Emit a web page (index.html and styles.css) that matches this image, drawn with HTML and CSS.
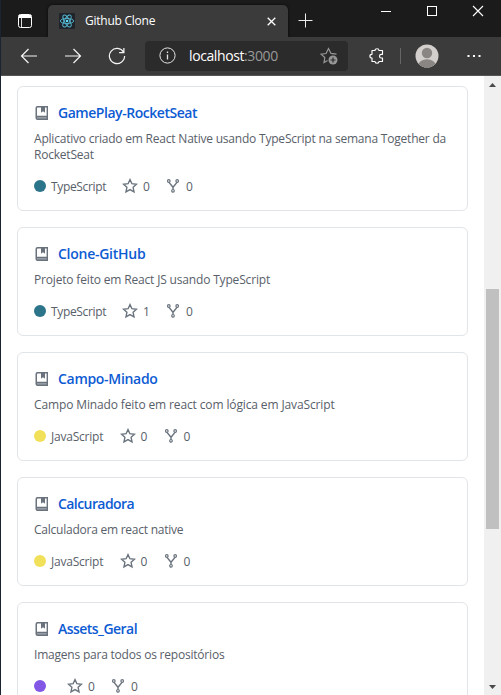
FILE: index.html
```
<!DOCTYPE html>
<html lang="pt-BR">
<head>
<meta charset="utf-8">
<title>Github Clone</title>
<link rel="stylesheet" href="styles.css">
</head>
<body>
<svg class="defs" aria-hidden="true">
  <symbol id="book" viewBox="0 0 16 16"><path fill-rule="evenodd" d="M3.500 1H14v14H3.500A2 2 0 0 1 1.500 13V3A2 2 0 0 1 3.500 1zM3 3.200v7.600h9.600V2.400H11v5L9 6 7 7.400v-5H3.800a.8.8 0 0 0-.8.8z"/><path d="M7 2h4v5.400L9 6 7 7.400z"/><path d="M3 12.500h9.600v.8H3z" fill="#c3c7cb"/></symbol>
  <symbol id="star" viewBox="0 0 16 16"><path fill="none" stroke="currentColor" stroke-width="1.400" d="M8 1.600l1.900 4.100 4.600.5-3.400 3.100.9 4.500L8 11.600l-4 2.200.9-4.500L1.500 6.200l4.600-.5z"/></symbol>
  <symbol id="fork" viewBox="0 0 16 16"><g fill="none" stroke="currentColor" stroke-width="1.200"><circle cx="3.800" cy="3" r="1.300"/><circle cx="12.200" cy="3" r="1.300"/><circle cx="8" cy="12.800" r="1.300"/><path stroke-width="1.400" d="M4 4.400L8 9.300L12 4.400M8 9v2.500"/></g></symbol>
</svg>
<div class="window">
  <header class="titlebar">
    <svg class="tabs-icon" viewBox="0 0 14 14"><rect x=".5" y=".5" width="13" height="13" rx="2" fill="none" stroke="#fff"/><path d="M1 1h12v3H1z" fill="#fff"/><path d="M3.500 4v9" stroke="#ddd"/></svg>
    <div class="tab">
      <svg class="react" viewBox="0 0 16 16"><rect width="16" height="16" rx="1" fill="#20232a"/><g fill="none" stroke="#54b8d1" stroke-width=".9"><ellipse cx="8" cy="8" rx="6.700" ry="2.600"/><ellipse cx="8" cy="8" rx="6.700" ry="2.600" transform="rotate(60 8 8)"/><ellipse cx="8" cy="8" rx="6.700" ry="2.600" transform="rotate(120 8 8)"/></g><circle cx="8" cy="8" r="1.300" fill="#61dafb"/></svg>
      <span class="tab-title">Github Clone</span>
      <svg class="tab-close" viewBox="0 0 9 9"><path d="M.7.7l7.600 7.600M8.300.7L.7 8.300" stroke="#fff" stroke-width="1.300"/></svg>
    </div>
    <svg class="plus" viewBox="0 0 15 15"><path d="M7.500 .5v14M.5 7.500h14" stroke="#eee"/></svg>
    <div class="controls">
      <svg viewBox="0 0 12 12"><path d="M1 6.500h10" stroke="#fff"/></svg>
      <svg viewBox="0 0 12 12"><rect x="1.500" y="1.500" width="9" height="9" fill="none" stroke="#fff"/></svg>
      <svg viewBox="0 0 12 12"><path d="M1 1l10 10M11 1L1 11" stroke="#fff" stroke-width="1.100"/></svg>
    </div>
  </header>
  <nav class="toolbar">
    <svg class="nav-icon" viewBox="0 0 18 18"><path d="M17 9H1.500M8.500 2l-7 7 7 7"/></svg>
    <svg class="nav-icon" viewBox="0 0 18 18"><path d="M1 9h15.500M9.500 2l7 7-7 7"/></svg>
    <svg class="nav-icon" viewBox="0 0 18 18"><path d="M15.600 5.200A7.600 7.600 0 1 0 16.600 9M15.900 1v4.600h-4.800"/></svg>
    <div class="address">
      <svg class="info" viewBox="0 0 17 17"><circle cx="8.500" cy="8.500" r="7.600" fill="none" stroke="#e5e5e5"/><path d="M8.500 7.500v5M8.500 4.500v1.400" stroke="#e5e5e5" stroke-width="1.300"/></svg>
      <span class="url">localhost<span class="port">:3000</span></span>
      <svg class="fav" viewBox="0 0 18 18"><path d="M7.500 13.600L4 15.600l.8-5L1 7.200l5-.7L8.500 1.500 11 6.400l5.500.8" fill="none" stroke="#979797" stroke-width="1.200"/><circle cx="13" cy="13" r="4.500" fill="#979797"/><path d="M10.500 13h5M13 10.500v5" stroke="#2c2c2c" stroke-width="1.200"/></svg>
    </div>
    <svg class="puzzle" viewBox="0 0 16 16"><path d="M3 2.500h3C6 .2 10 .2 10 2.500h3.500v3.800h-1.200c-2.400 0-2.400 3.700 0 3.700h1.200v3.500H10c0 2.300-4 2.300-4 0H3V10C.2 10 .2 6.300 3 6.300z" fill="none" stroke="#fff" stroke-width="1.150" stroke-linejoin="round"/></svg>
    <span class="divider"></span>
    <svg class="avatar" viewBox="0 0 24 24"><defs><clipPath id="face"><circle cx="12" cy="12" r="11.500"/></clipPath></defs><g clip-path="url(#face)"><path d="M0 0h24v24H0z" fill="#d2cfcc"/><circle cx="12" cy="9" r="5.200" fill="#8a8683"/><ellipse cx="12" cy="21" rx="8.500" ry="5.800" fill="#8a8683"/></g></svg>
    <svg class="more" viewBox="0 0 14 4"><path d="M.5 1h2v2h-2zM6 1h2v2H6zM11.500 1h2v2h-2z" fill="#fff"/></svg>
  </nav>
  <div class="viewport">
    <main class="repos">
      <article class="card">
        <h3><svg class="book"><use href="#book"/></svg><a class="n1">GamePlay-RocketSeat</a></h3>
        <p class="d1">Aplicativo criado em React Native usando TypeScript na semana Together da<br>RocketSeat</p>
        <footer><i class="dot ts"></i><span class="lang lang-ts">TypeScript</span><svg class="star"><use href="#star"/></svg><b>0</b><svg class="fork"><use href="#fork"/></svg><b>0</b></footer>
      </article>
      <article class="card">
        <h3><svg class="book"><use href="#book"/></svg><a class="n2">Clone-GitHub</a></h3>
        <p class="d2">Projeto feito em React JS usando TypeScript</p>
        <footer><i class="dot ts"></i><span class="lang lang-ts">TypeScript</span><svg class="star"><use href="#star"/></svg><b>1</b><svg class="fork"><use href="#fork"/></svg><b>0</b></footer>
      </article>
      <article class="card">
        <h3><svg class="book"><use href="#book"/></svg><a class="n3">Campo-Minado</a></h3>
        <p class="d3">Campo Minado feito em react com lógica em JavaScript</p>
        <footer><i class="dot js"></i><span class="lang lang-js">JavaScript</span><svg class="star"><use href="#star"/></svg><b>0</b><svg class="fork"><use href="#fork"/></svg><b>0</b></footer>
      </article>
      <article class="card">
        <h3><svg class="book"><use href="#book"/></svg><a class="n4">Calcuradora</a></h3>
        <p class="d4">Calculadora em react native</p>
        <footer><i class="dot js"></i><span class="lang lang-js">JavaScript</span><svg class="star"><use href="#star"/></svg><b>0</b><svg class="fork"><use href="#fork"/></svg><b>0</b></footer>
      </article>
      <article class="card">
        <h3><svg class="book"><use href="#book"/></svg><a class="n5">Assets_Geral</a></h3>
        <p class="d5">Imagens para todos os repositórios</p>
        <footer><i class="dot other"></i><span class="lang"></span><svg class="star"><use href="#star"/></svg><b>0</b><svg class="fork"><use href="#fork"/></svg><b>0</b></footer>
      </article>
    </main>
    <aside class="scrollbar">
      <svg class="arrow" viewBox="0 0 7 4"><path d="M0 4l3.500-4L7 4z"/></svg>
      <div class="thumb"></div>
      <svg class="arrow down" viewBox="0 0 7 4"><path d="M0 0l3.500 4L7 0z"/></svg>
    </aside>
  </div>
</div>
</body>
</html>
```
FILE: styles.css
```
* { box-sizing: border-box; }
html, body { margin: 0; height: 100%; overflow: hidden; }
body { background: #1b1b1b; font-family: "Open Sans", "Noto Sans", sans-serif; }
svg { display: block; flex: none; }
.defs { display: none; }
.window { height: 695px; border-left: 1px solid #1c2333; display: flex; flex-direction: column; }

.titlebar { height: 37px; flex: none; display: flex; align-items: flex-start; background: #1b1b1b; }
.tabs-icon { width: 14px; height: 14px; margin: 14px 0 0 17px; }
.tab { width: 240px; height: 32px; margin: 5px 0 0 16px; padding: 0 12px 0 11px; display: flex; align-items: center; background: #3b3b3b; border-radius: 5px 5px 0 0; box-shadow: 0 0 3px #080808; clip-path: inset(-4px -4px 0); }
.react { width: 16px; height: 16px; }
.tab-title { margin-left: 10px; color: #fff; font-size: 12px; line-height: 16px; letter-spacing: -.25px; white-space: nowrap; }
.tab-close { width: 9px; height: 9px; margin-left: auto; }
.plus { width: 15px; height: 15px; margin: 13px 0 0 10px; }
.controls { display: flex; gap: 34px; margin: 5px 17px 0 auto; }
.controls svg { width: 12px; height: 12px; }

.toolbar { height: 39px; flex: none; display: flex; align-items: center; padding: 0 20px 1px 19px; background: #3b3b3b; border-bottom: 1px solid #555; }
.nav-icon { width: 18px; height: 18px; margin-right: 26px; fill: none; stroke: #f5f5f5; stroke-width: 1.2; }
.address { width: 203px; height: 30px; margin-left: -7px; padding: 0 10px 0 14px; display: flex; align-items: center; background: #2b2b2b; border-radius: 4px; }
.info { width: 17px; height: 17px; }
.url { margin-left: 13px; color: #fff; font-size: 14px; line-height: 18px; letter-spacing: -.4px; padding-top: 1px; }
.port { color: #999; }
.fav { width: 18px; height: 18px; margin-left: auto; }
.puzzle { width: 16px; height: 16px; margin-left: 21px; }
.divider { width: 1px; height: 16px; margin-left: 15px; background: #666; }
.avatar { width: 24px; height: 24px; margin-left: 14px; }
.more { width: 14px; height: 4px; margin-left: auto; }

.viewport { flex: 1; min-height: 0; display: flex; background: #fff; overflow: hidden; }
.repos { flex: 1; min-width: 0; padding: 10px 16px 0; display: flex; flex-direction: column; gap: 16px; }
.card { flex: none; padding: 16px; border: 1px solid #e1e4e8; border-radius: 6px; }
.card h3 { height: 20px; margin: 0; display: flex; align-items: center; font-size: 14px; line-height: 20px; font-weight: 600; }
.book { width: 16px; height: 16px; margin-right: 8px; fill: #6a737d; }
.card a { color: #0d5bd3; white-space: nowrap; }
.card p { margin: 8px 0 15px; color: #586069; font-size: 12px; line-height: 16px; white-space: nowrap; }
.n1 { letter-spacing: -.46px; }
.n2 { letter-spacing: -.26px; }
.n3 { letter-spacing: -.3px; }
.n4 { letter-spacing: -.57px; }
.n5 { letter-spacing: -.54px; }
.card .d1 { letter-spacing: -.21px; }
.card .d2 { letter-spacing: -.17px; }
.card .d3 { letter-spacing: -.13px; }
.card .d4 { letter-spacing: -.24px; }
.card .d5 { letter-spacing: -.21px; }
.card footer { height: 16px; display: flex; align-items: center; color: #586069; font-size: 12px; line-height: 16px; }
.dot { width: 12px; height: 12px; margin-right: 5px; border-radius: 50%; }
.ts { background: #2b7489; }
.js { background: #f1e05a; }
.other { background: #8257e5; }
.lang { margin-right: 16px; padding-top: 1px; white-space: nowrap; letter-spacing: -.35px; }
.lang-ts { width: 55px; }
.lang-js { width: 52.5px; letter-spacing: -.22px; }
.star { width: 16px; height: 16px; color: #6a737d; }
.fork { width: 16px; height: 16px; margin-left: 15px; color: #6a737d; }
.card b { width: 7px; margin-left: 5px; padding-top: 1px; font-weight: 400; }

.scrollbar { width: 17px; flex: none; background: #f0f0f0; display: flex; flex-direction: column; align-items: center; }
.arrow { width: 7px; height: 4px; margin-top: 7px; fill: #4a4a4a; }
.thumb { width: 13px; height: 240px; margin-top: 202px; background: #c0c0c0; }
.down { margin: auto 0 6px; }
```
